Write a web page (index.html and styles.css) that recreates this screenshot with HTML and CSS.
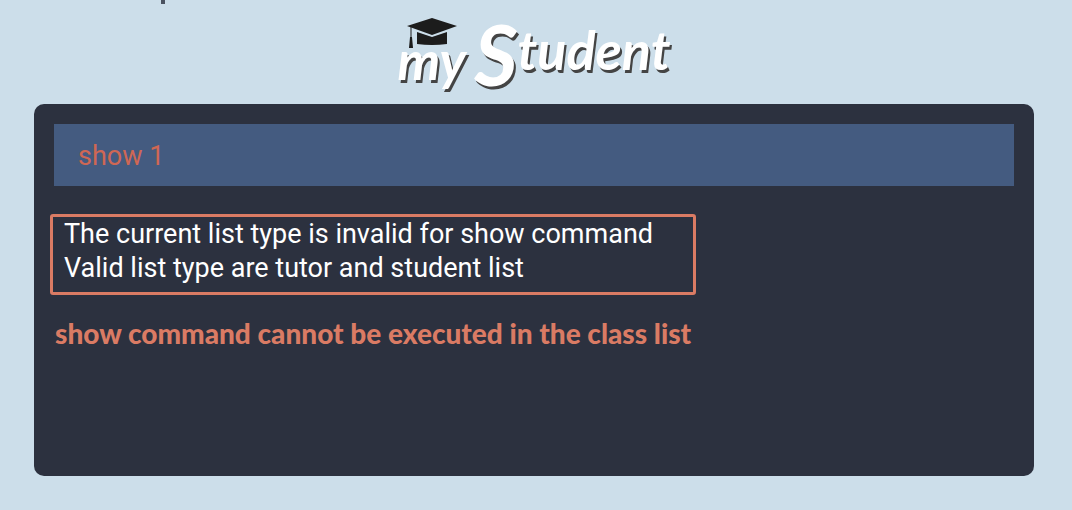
FILE: index.html
```
<!DOCTYPE html>
<html lang="en">
<head>
<meta charset="utf-8">
<title>myStudent</title>
<link rel="stylesheet" href="styles.css">
</head>
<body>
<header class="header">
  <span class="stem"></span>
  <h1 class="logo">
    <svg class="cap" viewBox="0 0 50 30" aria-hidden="true">
      <path class="cap-fill" d="M0 8 25 0 50 8 25 17Z"/>
      <path class="cap-fill" d="M10 14 25 19 40 14V26Q25 28 10 26Z"/>
      <path class="cap-cord" d="M4 9V20"/>
      <path class="cap-fill" d="M3 19H5L6 30H2Z"/>
    </svg>
    <span class="logo-my">my</span><span class="logo-name"><span class="logo-initial">S</span>tudent</span>
  </h1>
</header>
<main class="panel">
  <input class="command" type="text" aria-label="Command" value="show 1">
  <p class="result">The current list type is invalid for show command<br>Valid list type are tutor and student list</p>
  <p class="note">show command cannot be executed in the class list</p>
</main>
</body>
</html>
```
FILE: styles.css
```
* { box-sizing: border-box; }
body {
  margin: 0;
  min-height: 100vh;
  padding: 0 38px 34px 34px;
  display: flex;
  flex-direction: column;
  background: #ccdeea;
  font-family: Roboto, "Liberation Sans", sans-serif;
}
.header {
  position: relative;
  height: 104px;
  display: flex;
  justify-content: center;
}
.stem {
  position: absolute;
  left: 127px;
  top: 0;
  width: 4px;
  height: 4px;
  background: #4a5260;
}
.logo {
  position: relative;
  z-index: 0;
  margin: 0;
  padding-top: 14px;
  color: #fff;
  font: italic 700 54px/72px Lato, sans-serif;
  white-space: nowrap;
  text-shadow: 2px 3px 0 #444;
}
.logo-my {
  margin-right: 8px;
  line-height: 0;
  vertical-align: -10px;
}
.logo-initial {
  font-size: 84px;
  line-height: 0;
  vertical-align: -16px;
}
.cap {
  position: absolute;
  z-index: -1;
  left: 9px;
  top: 18px;
  width: 50px;
  height: 30px;
}
.cap-fill { fill: #1c1c1c; }
.cap-cord { fill: none; stroke: #1c1c1c; stroke-width: 1; }
.panel {
  flex: 1;
  padding: 20px;
  border-radius: 10px;
  background: #2c313f;
}
.command {
  display: block;
  width: 100%;
  height: 62px;
  padding: 2px 24px 0;
  border: 0;
  border-radius: 0;
  background: #445b80;
  color: #cf6754;
  font: 27px/34px Roboto, "Liberation Sans", sans-serif;
}
.result {
  width: fit-content;
  margin: 28px 0 0 -4px;
  padding: 0 40px 7px 11px;
  border: 3px solid #da7b64;
  border-radius: 3px;
  color: #fff;
  font-size: 27px;
  line-height: 34px;
}
.note {
  margin: 22px 0 0 1px;
  color: #da7b64;
  font: 900 28px/32px Lato, sans-serif;
}
```
